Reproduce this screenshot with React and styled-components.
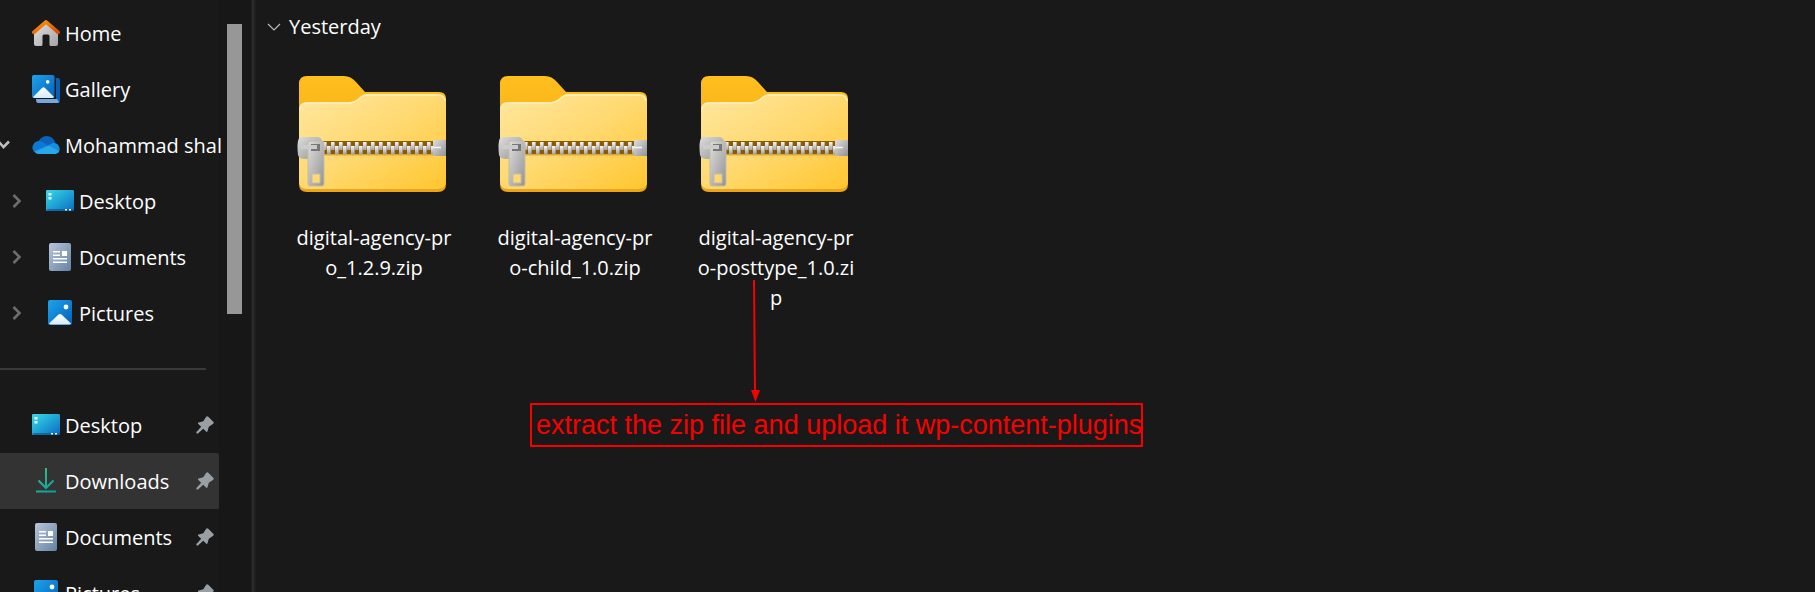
import React from "react";
import styled, { createGlobalStyle } from "styled-components";

const GlobalStyle = createGlobalStyle`
  * { box-sizing: border-box; }
  body {
    margin: 0;
    background: #191919;
    color: #fff;
    font-family: "Open Sans", "Noto Sans", sans-serif;
    font-size: 20px;
    overflow: hidden;
  }
`;

const Explorer = styled.div`
  display: flex;
  height: 100vh;
  overflow: hidden;
`;

const Sidebar = styled.nav`
  flex: none;
  width: 219px;
  padding-top: 5px;
`;

const NavList = styled.ul`
  margin: 0;
  padding: 0;
  list-style: none;
`;

const NavLink = styled.a`
  display: flex;
  align-items: center;
  height: 56px;
  padding-left: ${(p) => (p.$nested ? 46 : 32)}px;
  color: inherit;
  text-decoration: none;
  white-space: nowrap;
  background: ${(p) => (p.$selected ? "#333" : "transparent")};
  border-radius: 0 2px 2px 0;

  > svg { flex: none; }
`;

const NavItem = styled.li`
  position: relative;
`;

const NavLabel = styled.span`
  flex: 1;
  min-width: 0;
  margin-left: 5px;
  padding-top: 2px;
  line-height: 28px;
`;

const PinSlot = styled.span`
  display: flex;
  margin-right: 5px;
`;

const Toggle = styled.button`
  position: absolute;
  top: 16px;
  left: ${(p) => (p.$open ? -8 : 5)}px;
  display: flex;
  align-items: center;
  justify-content: center;
  width: 24px;
  height: 24px;
  padding: 0;
  border: 0;
  background: none;
`;

const Divider = styled.hr`
  height: 2px;
  margin: 27px 13px 27px 0;
  border: 0;
  background: #3a3a3a;
`;

const ScrollTrack = styled.div`
  flex: none;
  width: 32px;
  padding: 24px 9px 0 8px;
  background: #171717;
`;

const ScrollThumb = styled.div`
  height: 290px;
  background: #979797;
`;

const Splitter = styled.div`
  flex: none;
  width: 5px;
  background: #2b2b2b;
  border: solid #202020;
  border-width: 0 2px 0 1px;
`;

const Content = styled.main`
  flex: 1;
  min-width: 0;
  padding-top: 13px;
`;

const GroupHeader = styled.button`
  display: flex;
  align-items: center;
  gap: 8px;
  height: 28px;
  margin-left: 11px;
  padding: 0;
  border: 0;
  background: none;
  color: inherit;
  font: inherit;
  line-height: 28px;
`;

const FileGrid = styled.ul`
  display: flex;
  flex-wrap: wrap;
  gap: 37px;
  margin: 34px 0 0 36px;
  padding: 0;
  list-style: none;
`;

const FileTile = styled.li`
  position: relative;
  display: flex;
  flex-direction: column;
  align-items: center;
  width: 164px;
`;

const FileName = styled.span`
  width: 100%;
  margin-top: 31px;
  line-height: 30px;
  text-align: center;
  word-break: break-all;
`;

const Callout = styled.div`
  position: absolute;
  top: 205px;
  left: -164px;
  width: 613px;
  pointer-events: none;
`;

const CalloutArrow = styled.svg`
  display: block;
  margin-left: 218px;
`;

const CalloutText = styled.p`
  height: 44px;
  margin: 0;
  padding-left: 4px;
  border: 2px solid #f80000;
  color: #f80000;
  font: 27px/40px "Liberation Sans", Arial, sans-serif;
  white-space: nowrap;
`;

const HomeIcon = () => (
  <svg width="28" height="28" viewBox="0 0 28 28">
    <defs>
      <linearGradient id="wall" x1="0" y1="0" x2="1" y2="1"><stop stopColor="#e2e2e2" /><stop offset="1" stopColor="#a4a4a4" /></linearGradient>
      <linearGradient id="roof" x1="0" y1="0" x2="1" y2="1"><stop stopColor="#ff9a0a" /><stop offset="1" stopColor="#d84a08" /></linearGradient>
    </defs>
    <path d="M2 12 14 2l12 10v13q0 2-2 2h-5q-1.500 0-1.500-1.500V17q0-1.500-1.500-1.500h-4q-1.500 0-1.500 1.500v8.500Q10.500 27 9 27H4q-2 0-2-2z" fill="url(#wall)" />
    <path d="M1.800 13.300 14 2.800l12.200 10.500" fill="none" stroke="url(#roof)" strokeWidth="3.600" strokeLinecap="round" strokeLinejoin="round" />
  </svg>
);

const BlueFill = ({ id }) => (
  <defs>
    <linearGradient id={id} x1="0" y1="0" x2="1" y2="1"><stop stopColor="#1ca4ea" /><stop offset="1" stopColor="#0560bc" /></linearGradient>
    <linearGradient id={id + "Peak"} x1="0" y1="0" x2="0" y2="1"><stop stopColor="#fff" /><stop offset="1" stopColor="#d6eafb" /></linearGradient>
  </defs>
);

const GalleryIcon = () => (
  <svg width="28" height="28" viewBox="0 0 28 28">
    <BlueFill id="gallery" />
    <path d="M24 3h2q2 0 2 2v21q0 2-2 2h-3V3z" fill="#0a5fb4" />
    <path d="M4 24h21l2 3-1 1H6q-2 0-2-4z" fill="#76a7dc" />
    <rect width="24" height="24" fill="#191919" />
    <rect width="22.500" height="23" rx="1.800" fill="url(#gallery)" />
    <circle cx="15.700" cy="6.900" r="1.800" fill="#fff" />
    <path d="m1 22 9-9q1.500-1.500 3 0l9 9q-.5 1-1.500 1h-18Q1.400 23 1 22z" fill="url(#galleryPeak)" />
  </svg>
);

const CloudIcon = () => (
  <svg width="28" height="28" viewBox="0 0 28 28">
    <path d="M6 11.500Q8.500 5 14.500 5 21 5 23.500 12L17 17z" fill="#0b62b8" />
    <path d="M7 23a6.500 6.500 0 1 1 4-11.600L20 17l-5 6z" fill="#0c7ad4" />
    <path d="m16 14.500 5-2.500a6 6 0 0 1 5 10l-9-4z" fill="#1490df" />
    <path d="M2.500 20.500 16.500 14.400 27 20.200Q26 23 22 23H7q-3 0-4.500-2.500z" fill="#28a8ea" />
  </svg>
);

const DesktopIcon = () => (
  <svg width="28" height="28" viewBox="0 0 28 28">
    <defs>
      <linearGradient id="desk" x1="0" y1="0" x2="1" y2="1"><stop stopColor="#35dbe6" /><stop offset="1" stopColor="#0a6cc4" /></linearGradient>
    </defs>
    <rect y="3" width="28" height="21" rx="1.300" fill="url(#desk)" />
    <path d="M1 22h26.800v.7q0 1.300-1.300 1.300h-25z" fill="#0b5794" opacity=".7" />
    <path d="M2.500 6h3v2.500h-3zM2.500 10h3v2.500h-3zM19 22h2v1.500h-2zM23 22h2v1.500h-2z" fill="#e9fcff" />
  </svg>
);

const DocumentIcon = () => (
  <svg width="28" height="28" viewBox="0 0 28 28">
    <defs>
      <linearGradient id="doc" x1="0" y1="0" x2="1" y2="1"><stop stopColor="#b8c6da" /><stop offset="1" stopColor="#6482a2" /></linearGradient>
    </defs>
    <rect x="3" width="22" height="28" rx="2" fill="url(#doc)" />
    <path d="M7 8h7v1.500H7zM7 11.500h7V13H7zM16 8h5v5h-5zM7 15h14v1.500H7zM7 18.500h14V20H7z" fill="#fff" />
  </svg>
);

const PicturesIcon = () => (
  <svg width="28" height="28" viewBox="0 0 28 28">
    <BlueFill id="pics" />
    <rect x="2" y="1" width="24" height="25" rx="2" fill="url(#pics)" />
    <circle cx="20" cy="8" r="2.400" fill="#fff" />
    <path d="m3 24.500 9.500-9q1.500-1.200 3 0l9.500 9q-.5 1-1.500 1h-19z" fill="url(#picsPeak)" />
  </svg>
);

const DownloadIcon = () => (
  <svg width="28" height="28" viewBox="0 0 28 28">
    <defs>
      <linearGradient id="down" gradientUnits="userSpaceOnUse" x1="4" y1="2" x2="24" y2="26"><stop stopColor="#38c282" /><stop offset="1" stopColor="#0b9aa4" /></linearGradient>
    </defs>
    <path d="M14 1v19M6.500 13.500l7.500 7.500 7.500-7.500M4 24.500h20" fill="none" stroke="url(#down)" strokeWidth="2" />
  </svg>
);

const PinIcon = () => (
  <svg width="18" height="18" viewBox="0 0 18 18">
    <path d="M10.200.8q1-1.100 2.100 0l4.900 4.900q1.100 1.100 0 2.100l-4.400 2.900-1.300 4.600q-.5 1.200-1.500.3L7.200 12.800 2 17.600H.4V16l4.800-5.200L2.300 8q-.9-1 .3-1.500l4.700-1.300z" fill="#98a0a6" />
  </svg>
);

const Chevron = ({ open }) => (
  <svg width="12" height="16" viewBox="0 0 12 16">
    <path d={open ? "m1 5 4.500 5L11 4.500" : "m2.500 2 6 6-6 6"} fill="none" stroke={open ? "#bdbdbd" : "#6d6d6d"} strokeWidth="2.600" />
  </svg>
);

const teeth = Array.from({ length: 14 }, (_, i) => 26 + i * 8);

const ZipFolderIcon = () => (
  <svg width="154" height="117" viewBox="0 0 154 117">
    <defs>
      <linearGradient id="front" x1="0" y1="0" x2="1" y2="1"><stop stopColor="#ffe79f" /><stop offset=".5" stopColor="#ffd970" /><stop offset="1" stopColor="#ffc62f" /></linearGradient>
      <linearGradient id="back" x1="0" y1="0" x2="0" y2="1"><stop stopColor="#ffbf1c" /><stop offset="1" stopColor="#eca41a" /></linearGradient>
      <linearGradient id="steel" x1="0" y1="0" x2="1" y2="1"><stop stopColor="#dedede" /><stop offset="1" stopColor="#929292" /></linearGradient>
      <linearGradient id="tooth" x1="0" y1="0" x2="0" y2="1"><stop stopColor="#fafafa" /><stop offset="1" stopColor="#a2a2a2" /></linearGradient>
    </defs>
    <path d="M10 1h37q7 0 12 6l9 10h74q7 0 7 7v85q0 8-8 8H10q-8 0-8-8V9q0-8 8-8z" fill="url(#back)" />
    <path d="M10 27h42q5 0 10-4 4-4 8-4h71q8 0 8 8v79q0 8-8 8H10q-8 0-8-8V35q0-8 8-8z" fill="url(#front)" />
    <path d="M3 34q1-6 7-6h42q5 0 10-4 4-4 8-4h71q6 0 7 6" fill="none" stroke="#fff0bd" strokeWidth="1.500" />
    <path d="M24 66h114v13H24z" fill="#8a5a04" />
    <path d="M24 79h114v1.500H24z" fill="#d6a83e" />
    {teeth.map((x) => (
      <g key={x} fill="url(#tooth)">
        <rect x={x} y="67" width="3.600" height="8" />
        <rect x={x + 4} y="71" width="3.600" height="8" />
      </g>
    ))}
    <path d="M136 66q0-1 2-1h11v16h-13z" fill="url(#steel)" />
    <path d="M136 72.500h8" stroke="#f4f4f4" strokeWidth="1.500" />
    <path d="M4 62h17q4 1 4 5v15l-17 2q-6 0-7-4-1-9 0-14 1-4 3-4z" fill="url(#steel)" />
    <path d="M13 66h12q2 0 2 2v41q0 2-2 2H13q-2 0-2-2V68q0-2 2-2zm2 33v9h8v-9z" fill="url(#steel)" stroke="#c3bca7" strokeWidth="1" fillRule="evenodd" />
    <path d="M14 69h9v7h-9z" fill="#777" />
    <path d="M4 70h16v4H4z" fill="#ccc" />
  </svg>
);

const places = [
  { label: "Home", Icon: HomeIcon },
  { label: "Gallery", Icon: GalleryIcon },
  { label: "Mohammad shal", Icon: CloudIcon, open: true },
  { label: "Desktop", Icon: DesktopIcon, nested: true },
  { label: "Documents", Icon: DocumentIcon, nested: true },
  { label: "Pictures", Icon: PicturesIcon, nested: true },
];

const pinned = [
  { label: "Desktop", Icon: DesktopIcon },
  { label: "Downloads", Icon: DownloadIcon, selected: true },
  { label: "Documents", Icon: DocumentIcon },
  { label: "Pictures", Icon: PicturesIcon },
];

const Place = ({ label, Icon, nested, open, selected, pin }) => (
  <NavItem>
    <NavLink href="#" $nested={nested} $selected={selected}>
      <Icon />
      <NavLabel>{label}</NavLabel>
      {pin && <PinSlot><PinIcon /></PinSlot>}
    </NavLink>
    {(nested || open) && (
      <Toggle type="button" $open={open} aria-label={"Toggle " + label}>
        <Chevron open={open} />
      </Toggle>
    )}
  </NavItem>
);

const File = ({ name, children }) => (
  <FileTile>
    <ZipFolderIcon />
    <FileName>{name}</FileName>
    {children}
  </FileTile>
);

export default function App() {
  return (
    <Explorer>
      <GlobalStyle />
      <Sidebar>
        <NavList>{places.map((p) => <Place key={p.label} {...p} />)}</NavList>
        <Divider />
        <NavList>{pinned.map((p) => <Place key={p.label} {...p} pin />)}</NavList>
      </Sidebar>
      <ScrollTrack><ScrollThumb /></ScrollTrack>
      <Splitter />
      <Content>
        <GroupHeader type="button">
          <svg width="14" height="8" viewBox="0 0 14 8">
            <path d="m1 1 6 6 6-6" fill="none" stroke="#bbb" strokeWidth="1.200" />
          </svg>
          Yesterday
        </GroupHeader>
        <FileGrid>
          <File name="digital-agency-pro_1.2.9.zip" />
          <File name="digital-agency-pro-child_1.0.zip" />
          <File name="digital-agency-pro-posttype_1.0.zip">
            <Callout>
              <CalloutArrow width="14" height="123" viewBox="0 0 14 123">
                <path d="m6 0 1 112" stroke="#f80000" strokeWidth="2" />
                <path d="M3 110h9l-4.500 12z" fill="#f80000" />
              </CalloutArrow>
              <CalloutText>extract the zip file and upload it wp-content-plugins</CalloutText>
            </Callout>
          </File>
        </FileGrid>
      </Content>
    </Explorer>
  );
}
